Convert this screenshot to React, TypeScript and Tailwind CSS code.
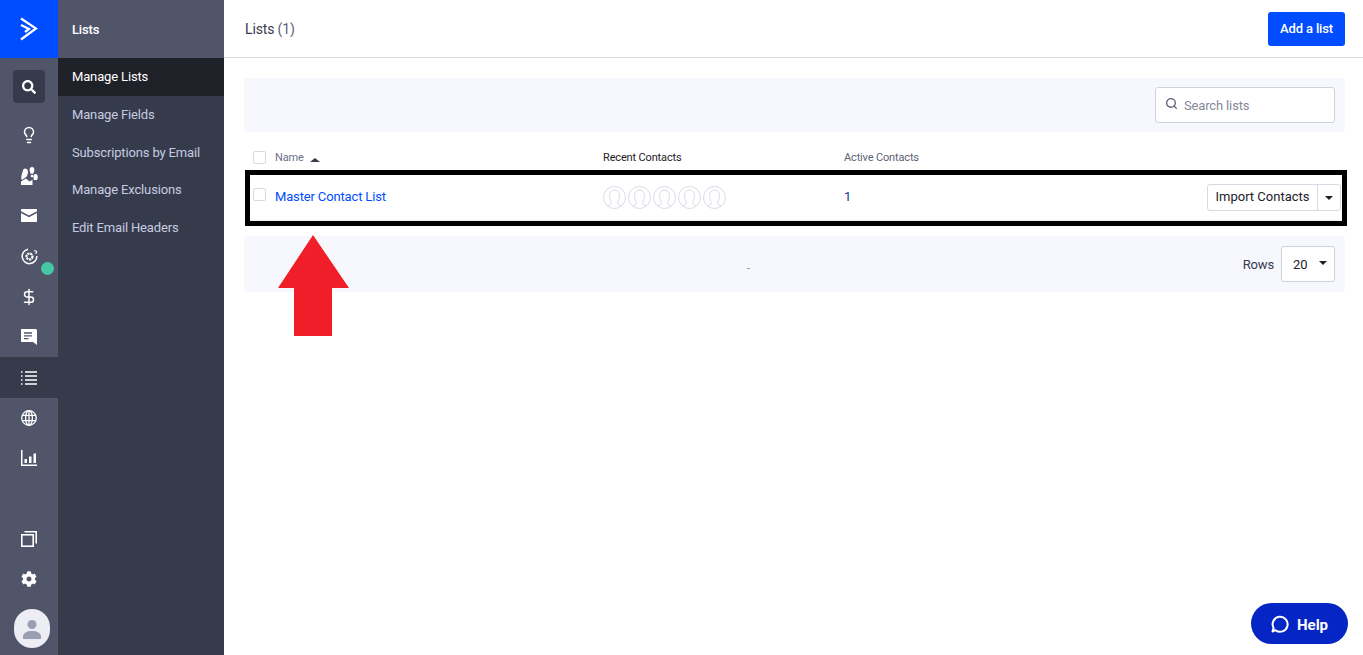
import React from 'react';
import { Search, Lightbulb, DollarSign } from 'lucide-react';
import { FaCog, FaSearch } from 'react-icons/fa';

const subNav = ['Manage Lists', 'Manage Fields', 'Subscriptions by Email', 'Manage Exclusions', 'Edit Email Headers'];

const ContactsIcon = () => (
  <svg width="17" height="18" viewBox="0 0 17 18" fill="white">
    <path d="M4 1.500c2 0 3 1.600 3 3.600 0 1.600-.7 3-1 4.200L1 13c-.6-1-1-2.400-.6-4 .4-2 1-3.500 1.400-5 .3-1.300 1-2.500 2.200-2.500z" />
    <path d="M11 0c1.600 0 2.400 1.300 2.400 2.800 0 1.400-.8 2.600-1.200 3.900H9.500C9.200 5.400 8.600 4.200 8.600 2.800 8.600 1.300 9.500 0 11 0z" />
    <circle cx="11" cy="9" r="1.300" />
    <path d="M14.500 7c1.400 0 2.300 1.300 2.300 2.800 0 1.300-.3 2.600-.9 3.200h-3c-.3-1-.6-2-.5-3.200.1-1.400.8-2.800 2.100-2.800z" />
    <path d="M0 14.500l5 -3 3.500 3 3-1.800V18H0z" />
  </svg>
);

const MailIcon = () => (
  <svg width="16" height="13" viewBox="0 0 16 13" fill="white">
    <path d="M1 0h14c.6 0 1 .4 1 1v1.200L8 6.500 0 2.200V1c0-.6.4-1 1-1z" />
    <path d="M0 4l8 4.300L16 4v8c0 .6-.4 1-1 1H1c-.6 0-1-.4-1-1z" />
  </svg>
);

const GoalIcon = () => (
  <svg width="17" height="17" viewBox="0 0 17 17" fill="none" stroke="white">
    <path d="M7 1.200A7.300 7.300 0 1 0 15.800 8" strokeWidth="1.500" />
    <path d="M13 2.500l2.500 .8-.6 2.500" strokeWidth="1.200" />
    <circle cx="8.500" cy="8.500" r="3" strokeWidth="2.200" strokeDasharray="2.200 .7" />
  </svg>
);

const ChatIcon = () => (
  <svg width="16" height="16" viewBox="0 0 16 16">
    <path d="M1 0h13.500c.8 0 1.500.7 1.500 1.500V16l-4-3H1c-.6 0-1-.4-1-1V1c0-.6.4-1 1-1z" fill="white" />
    <path d="M3 4h8M3 6.800h8M3 9.600h4.500" stroke="#50556a" strokeWidth="1.300" />
  </svg>
);

const ListIcon = () => (
  <svg width="16" height="14" viewBox="0 0 16 14" stroke="white" strokeWidth="1.600" fill="none">
    <path d="M0 1h1.500M4 1h12M0 5h1.500M4 5h12M0 9h1.500M4 9h12M0 13h1.500M4 13h12" />
  </svg>
);

const GlobeIcon = () => (
  <svg width="16" height="16" viewBox="0 0 16 16" fill="none" stroke="white" strokeWidth="1.300">
    <circle cx="8" cy="8" r="7.300" />
    <ellipse cx="8" cy="8" rx="3.400" ry="7.300" />
    <path d="M8 .7v14.600M1.200 5.300h13.600M1.200 10.700h13.600" />
  </svg>
);

const ChartIcon = () => (
  <svg width="16" height="16" viewBox="0 0 16 16" fill="white">
    <path d="M0 0h1.500v14.500H16V16H0z" />
    <rect x="3.500" y="9" width="2.500" height="4" />
    <rect x="8" y="6.500" width="2.500" height="6.500" />
    <rect x="12.500" y="3.500" width="2.500" height="9.500" />
  </svg>
);

const CopyIcon = () => (
  <svg width="16" height="16" viewBox="0 0 16 16" fill="none" stroke="white" strokeWidth="1.600">
    <rect x="0.800" y="3.800" width="11.400" height="11.400" />
    <path d="M3.500 .8H15.200V12.500" />
  </svg>
);

const RailItem = ({ children, active }: { children: React.ReactNode; active?: boolean }) => (
  <div className={`flex h-[40.400px] items-center justify-center ${active ? 'bg-[#363b4c]' : ''}`}>{children}</div>
);

const Face = () => (
  <svg width="23" height="23" viewBox="0 0 23 23" fill="none" stroke="#d9dbe6" strokeWidth="1">
    <circle cx="11.500" cy="11.500" r="11" />
    <path d="M5 20c1.500-1 3-1.500 3.500-2.500C7.500 15 6.500 12 6.500 9.500 6.500 6 8.500 4 11.500 4s5 2 5 5.500c0 2.500-1 5.500-2 8 .5 1 2 1.500 3.500 2.500" />
  </svg>
);

export default function App() {
  return (
    <div className="relative flex h-[655px] w-full overflow-hidden bg-white font-['Roboto','Liberation_Sans',sans-serif] text-[13px] tracking-[-0.15px] text-[#1f2129]">
      {/* Icon rail */}
      <aside className="flex w-[58px] shrink-0 flex-col bg-[#50556a]">
        <div className="flex h-[58px] items-center justify-center bg-[#004cff]">
          <svg width="18" height="24" viewBox="0 0 18 24" fill="none" stroke="white" strokeWidth="2.200">
            <path d="M1 1.500L16 11.500 1 22.500" />
            <path d="M1 8L9 12 5 15" />
          </svg>
        </div>
        <div className="flex h-[57px] justify-center pt-3">
          <div className="flex h-[33px] w-8 items-center justify-center rounded-[4px] bg-[#363b4c]">
            <FaSearch size={14} color="white" />
          </div>
        </div>
        <RailItem><Lightbulb size={18} color="white" strokeWidth={2} /></RailItem>
        <RailItem><ContactsIcon /></RailItem>
        <RailItem><MailIcon /></RailItem>
        <div className="relative">
          <RailItem><GoalIcon /></RailItem>
          <span className="absolute left-[41px] top-[26px] h-[13px] w-[13px] rounded-full bg-[#45c9a5]" />
        </div>
        <RailItem><DollarSign size={18} color="white" strokeWidth={2} /></RailItem>
        <RailItem><ChatIcon /></RailItem>
        <RailItem active><ListIcon /></RailItem>
        <RailItem><GlobeIcon /></RailItem>
        <RailItem><ChartIcon /></RailItem>
        <div className="flex-1" />
        <div className="flex h-10 items-center justify-center"><CopyIcon /></div>
        <div className="flex h-10 items-center justify-center"><FaCog size={16} color="white" /></div>
        <div className="mb-[7px] ml-[14px] mt-[10px] flex h-[39px] w-9 items-center justify-center overflow-hidden rounded-full bg-[#eceef4]">
          <svg width="20" height="20" viewBox="0 0 20 20" fill="#9a9fb4">
            <circle cx="10" cy="5.500" r="4.500" />
            <path d="M1 20v-2.500C1 14 5 12 10 12s9 2 9 5.500V20z" />
          </svg>
        </div>
      </aside>

      {/* Secondary nav */}
      <nav className="flex w-[166px] shrink-0 flex-col bg-[#363b4c]">
        <div className="flex h-[58px] items-center bg-[#50556a] pl-[14px] pt-[1px] font-medium text-white">Lists</div>
        {subNav.map((item, i) => (
          <div
            key={item}
            className={`flex h-[37.750px] items-center pl-[14px] ${i === 0 ? 'bg-[#1f2129] text-white' : 'text-[#c5cce0]'}`}
          >
            {item}
          </div>
        ))}
      </nav>

      {/* Main */}
      <main className="flex min-w-0 flex-1 flex-col">
        <header className="flex h-[58px] items-center justify-between border-b border-[#d8d9e2] pl-[21px] pr-[18px]">
          <h1 className="pt-[2px] text-[14px] text-[#363b4c]">
            Lists <span className="text-[#5c6178]">(1)</span>
          </h1>
          <button className="flex h-[34px] w-[77px] items-center justify-center rounded-[3px] bg-[#004cff] pt-[1px] font-medium text-white">
            Add a list
          </button>
        </header>

        <div className="ml-5 mr-[18px] mt-5 flex flex-col">
          <div className="flex h-[54px] items-center justify-end rounded-[3px] bg-[#f7f8fd] pr-[10px]">
            <div className="flex h-9 w-[180px] items-center gap-[6px] rounded-[3px] border border-[#cfd1dd] bg-white pl-[9px] pt-[1px]">
              <Search size={13} color="#5c6178" strokeWidth={2.500} className="-mt-[5px]" />
              <span className="text-[#85889a]">Search lists</span>
            </div>
          </div>

          <div className="grid h-[38px] grid-cols-[31px_328px_241px_1fr] items-center pt-[14px] text-[11px]">
            <span className="-mt-[1px] ml-[9px] h-[13px] w-[13px] rounded-[2px] border border-[#d8d9e2]" />
            <span className="flex items-center gap-[6px] text-[#6b7086]">
              Name
              <span className="mt-[3px] h-0 w-0 border-x-[5px] border-b-[4px] border-x-transparent border-b-[#363b4c]" />
            </span>
            <span className="text-[#1f2129]">Recent Contacts</span>
            <span className="text-[#5c6178]">Active Contacts</span>
          </div>

          {/* Table row with annotation frame */}
          <div className="relative grid h-[56px] grid-cols-[31px_328px_241px_1fr_auto] items-center pb-[2px]">
            <span className="-mt-[5px] ml-[9px] h-[13px] w-[13px] rounded-[2px] border border-[#d8d9e2]" />
            <a className="text-[#004cff]">Master Contact List</a>
            <span className="flex gap-[2px]">
              {[0, 1, 2, 3, 4].map(i => <Face key={i} />)}
            </span>
            <span className="text-[#0a3a9a]">1</span>
            <div className="flex h-[27px] w-[134px] translate-x-[-4px] rounded-[3px] border border-[#d8d9e2]">
              <span className="flex flex-1 items-center justify-center tracking-normal">Import Contacts</span>
              <span className="flex w-[23px] items-center justify-center border-l border-[#d8d9e2]">
                <span className="mt-[2px] h-0 w-0 border-x-[4px] border-t-[4px] border-x-transparent border-t-[#1f2129]" />
              </span>
            </div>
            <div className="absolute inset-x-[5px] bottom-[5px] h-px translate-x-[1px] bg-[#eceef4]" />
            <div className="pointer-events-none absolute -right-[2px] left-[1px] top-0 h-[56px] border-[5px] border-black" />
          </div>

          <div className="relative mt-[10px] flex h-14 items-center justify-end gap-[7px] rounded-[3px] bg-[#f7f8fd] pr-[10px]">
            <span className="absolute left-[503px] top-[25px] text-[11px] text-[#85889a]">-</span>
            <span className="pt-[1px] text-[#363b4c]">Rows</span>
            <div className="flex h-9 w-[54px] items-center justify-between rounded-[3px] border border-[#cfd1dd] bg-white pl-[11px] pr-[7px] pt-[1px]">
              20
              <span className="mb-[4px] h-0 w-0 border-x-[4px] border-t-[4px] border-x-transparent border-t-[#1f2129]" />
            </div>
          </div>
        </div>
      </main>

      {/* Red annotation arrow */}
      <svg className="absolute left-[278px] top-[235px]" width="71" height="101" viewBox="0 0 71 101">
        <path d="M35 0L71 53H54V101H16V53H0z" fill="#f01e28" />
      </svg>

      <button className="absolute left-[1251px] top-[603px] flex h-[41px] w-[97px] items-center justify-center gap-2 rounded-full bg-[#0526c4] text-[15px] font-bold tracking-normal text-white">
        <svg width="18" height="18" viewBox="0 0 18 18" fill="none" stroke="white" strokeWidth="2" strokeLinejoin="round">
          <path d="M1.500 16.500L4.500 15.200A7.500 7.500 0 1 0 2.600 13z" />
        </svg>
        <span className="pt-[3px]">Help</span>
      </button>
    </div>
  );
}
